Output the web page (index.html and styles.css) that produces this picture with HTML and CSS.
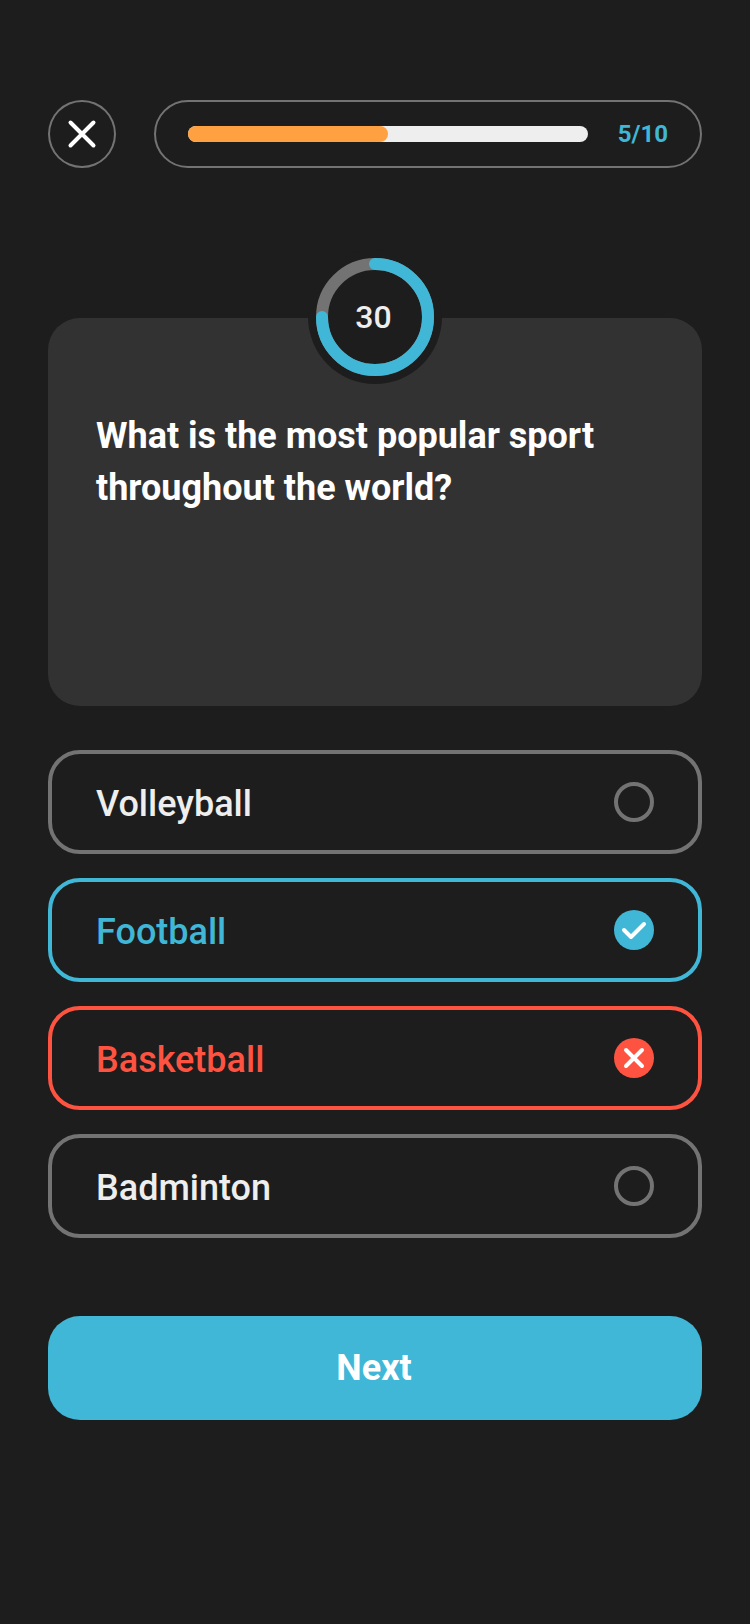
FILE: index.html
```html
<!DOCTYPE html>
<html lang="en">
<head>
<meta charset="utf-8">
<title>Quiz</title>
<link rel="stylesheet" href="styles.css">
</head>
<body>
<main class="quiz">
  <header class="topbar">
    <button class="close" aria-label="Close">
      <svg width="32" height="32" viewBox="0 0 32 32"><path d="M4.500 4.500l23 23M27.500 4.500l-23 23"/></svg>
    </button>
    <div class="progress">
      <div class="track"><div class="fill" style="width:50%"></div></div>
      <span class="count">5/10</span>
    </div>
  </header>

  <section class="card">
    <div class="timer">
      <svg class="ring" width="118" height="118" viewBox="0 0 118 118">
        <circle class="ring-base" cx="59" cy="59" r="53"/>
        <path class="ring-value" d="M59 6A53 53 0 1 1 6 59"/>
      </svg>
      <span class="seconds">30</span>
    </div>
    <h1 class="question">What is the most popular sport throughout the world?</h1>
  </section>

  <ul class="options">
    <li class="option"><span class="label">Volleyball</span><span class="mark"></span></li>
    <li class="option correct"><span class="label">Football</span>
      <span class="mark"><svg width="40" height="40" viewBox="0 0 40 40"><path d="M10 20l7 7 13-13"/></svg></span></li>
    <li class="option wrong"><span class="label">Basketball</span>
      <span class="mark"><svg width="40" height="40" viewBox="0 0 40 40"><path d="M12 12l16 16M28 12l-16 16"/></svg></span></li>
    <li class="option"><span class="label">Badminton</span><span class="mark"></span></li>
  </ul>

  <button class="next">Next</button>
</main>
</body>
</html>
```
FILE: styles.css
```css
* { box-sizing: border-box; }

body {
  margin: 0;
  background: #1d1d1d;
  color: #eee;
  font-family: Roboto, "Liberation Sans", sans-serif;
}

button {
  font: inherit;
  padding: 0;
  background: none;
  border: 0;
}

svg {
  display: block;
  fill: none;
  stroke: #fff;
  stroke-width: 4;
  stroke-linecap: round;
  stroke-linejoin: round;
}

.quiz {
  display: flex;
  flex-direction: column;
  min-height: 1624px;
  padding: 100px 48px 0;
}

.topbar {
  display: flex;
  gap: 38px;
  height: 68px;
}

.close {
  display: flex;
  align-items: center;
  justify-content: center;
  width: 68px;
  border: 2px solid #737373;
  border-radius: 50%;
}

.progress {
  flex: 1;
  display: flex;
  align-items: center;
  gap: 30px;
  padding: 0 32px;
  border: 2px solid #737373;
  border-radius: 34px;
}

.track {
  width: 400px;
  height: 16px;
  border-radius: 8px;
  background: #eee;
}

.fill {
  height: 100%;
  border-radius: 8px;
  background: #ffa041;
}

.count {
  font-size: 24px;
  line-height: 28px;
  font-weight: 700;
  color: #40b7d6;
}

.card {
  position: relative;
  height: 388px;
  margin-top: 150px;
  padding: 92px 48px 0;
  border-radius: 32px;
  background: #323232;
}

/* The countdown straddles the card's top edge */
.timer {
  position: absolute;
  top: -68px;
  left: 260px;
  display: grid;
  place-items: center;
  width: 134px;
  height: 134px;
  border-radius: 50%;
  background: #1d1d1d;
}

.ring, .seconds { grid-area: 1 / 1; }
.ring { stroke-width: 12; }
.ring-base { stroke: #737373; }
.ring-value { stroke: #40b7d6; }

.seconds {
  padding-right: 3px;
  font-size: 32px;
  line-height: 38px;
  font-weight: 500;
}

.question {
  margin: 0;
  font-size: 36px;
  line-height: 52px;
  font-weight: 700;
  color: #fff;
}

.options {
  display: grid;
  gap: 24px;
  margin: 44px 0 0;
  padding: 0;
  list-style: none;
}

.option {
  display: flex;
  align-items: center;
  justify-content: space-between;
  height: 104px;
  padding: 0 44px;
  border: 4px solid #737373;
  border-radius: 32px;
}

.label {
  padding-top: 4px;
  font-size: 36px;
  line-height: 42px;
  font-weight: 500;
}

.mark {
  width: 40px;
  height: 40px;
  border: 4px solid #737373;
  border-radius: 50%;
}

.correct { border-color: #40b7d6; color: #40b7d6; }
.wrong { border-color: #ff5341; color: #ff5341; }
.correct .mark { border: 0; background: #40b7d6; }
.wrong .mark { border: 0; background: #ff5341; }

.next {
  height: 104px;
  margin-top: 78px;
  padding-right: 2px;
  border-radius: 32px;
  background: #40b7d6;
  color: #fff;
  font-size: 36px;
  font-weight: 700;
}
```
